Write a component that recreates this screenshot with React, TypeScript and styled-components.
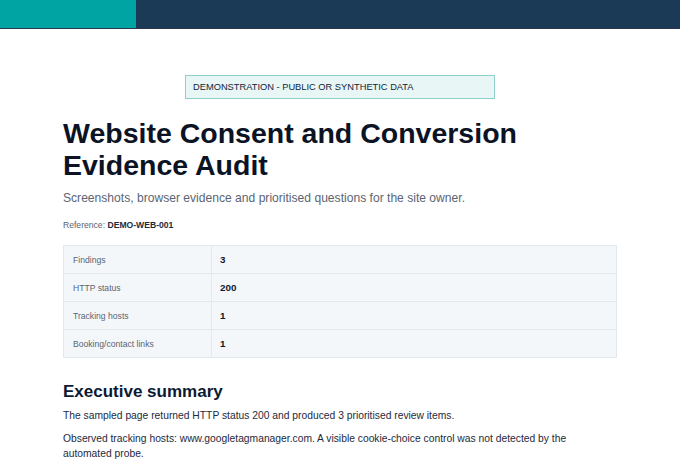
import React from 'react';
import styled, { createGlobalStyle } from 'styled-components';

const GlobalStyle = createGlobalStyle`
  body {
    margin: 0;
    background: #ffffff;
    font-family: 'Liberation Sans', Arial, sans-serif;
    color: #0f172a;
  }
`;

const TopBar = styled.div`
  display: grid;
  grid-template-columns: 136px 1fr;
  height: 28px;
  border-bottom: 1px solid #2b3550;
`;

const Accent = styled.div<{ tone: string }>`
  background: ${({ tone }) => tone};
`;

const Page = styled.main`
  width: 554px;
  margin: 0 auto;
  padding-top: 46px;
`;

const Badge = styled.div`
  width: 294px;
  margin: 0 auto;
  padding: 6px 7px;
  background: #e8f6f5;
  border: 1px solid #8fcfca;
  font-size: 9.3px;
  color: #10243a;
`;

const Title = styled.h1`
  margin: 18px 0 0;
  font-size: 28.5px;
  line-height: 32px;
  font-weight: 700;
  color: #0b1324;
`;

const Subtitle = styled.p`
  margin: 10px 0 0;
  font-size: 12.1px;
  color: #5b6472;
`;

const RefLine = styled.p`
  margin: 15px 0 0;
  font-size: 8.6px;
  color: #5b6472;
  & b { color: #1e293b; }
`;

const Table = styled.div`
  margin-top: 15px;
  display: grid;
  grid-template-columns: 147px 1fr;
  background: #f3f7fa;
  border: 1px solid #e1e8ee;
`;

const Cell = styled.div<{ value?: boolean; last?: boolean }>`
  height: 27px;
  display: flex;
  align-items: center;
  padding-left: ${({ value }) => (value ? '8px' : '9px')};
  border-bottom: ${({ last }) => (last ? 'none' : '1px solid #e1e8ee')};
  border-left: ${({ value }) => (value ? '1px solid #e1e8ee' : 'none')};
  font-size: ${({ value }) => (value ? '9.8px' : '8.6px')};
  font-weight: ${({ value }) => (value ? 700 : 400)};
  color: ${({ value }) => (value ? '#0f172a' : '#5b6472')};
`;

const Heading = styled.h2`
  margin: 24px 0 0;
  font-size: 17px;
  font-weight: 700;
  color: #0b1a33;
`;

const Para = styled.p`
  margin: 6px 0 0;
  font-size: 10.3px;
  line-height: 15px;
  color: #1e293b;
  & + & { margin-top: 8px; }
`;

const rows = [
  ['Findings', '3'],
  ['HTTP status', '200'],
  ['Tracking hosts', '1'],
  ['Booking/contact links', '1'],
];

export default function App() {
  return (
    <>
      <GlobalStyle />
      <TopBar>
        <Accent tone="#00a5a3" />
        <Accent tone="#1b3a56" />
      </TopBar>
      <Page>
        <Badge>DEMONSTRATION - PUBLIC OR SYNTHETIC DATA</Badge>
        <Title>Website Consent and Conversion<br />Evidence Audit</Title>
        <Subtitle>Screenshots, browser evidence and prioritised questions for the site owner.</Subtitle>
        <RefLine>Reference: <b>DEMO-WEB-001</b></RefLine>
        <Table>
          {rows.map(([label, val], i) => (
            <React.Fragment key={label}>
              <Cell last={i === rows.length - 1}>{label}</Cell>
              <Cell value last={i === rows.length - 1}>{val}</Cell>
            </React.Fragment>
          ))}
        </Table>
        <Heading>Executive summary</Heading>
        <Para>The sampled page returned HTTP status 200 and produced 3 prioritised review items.</Para>
        <Para>
          Observed tracking hosts: www.googletagmanager.com. A visible cookie-choice control was not detected by the
          automated probe.
        </Para>
      </Page>
    </>
  );
}
